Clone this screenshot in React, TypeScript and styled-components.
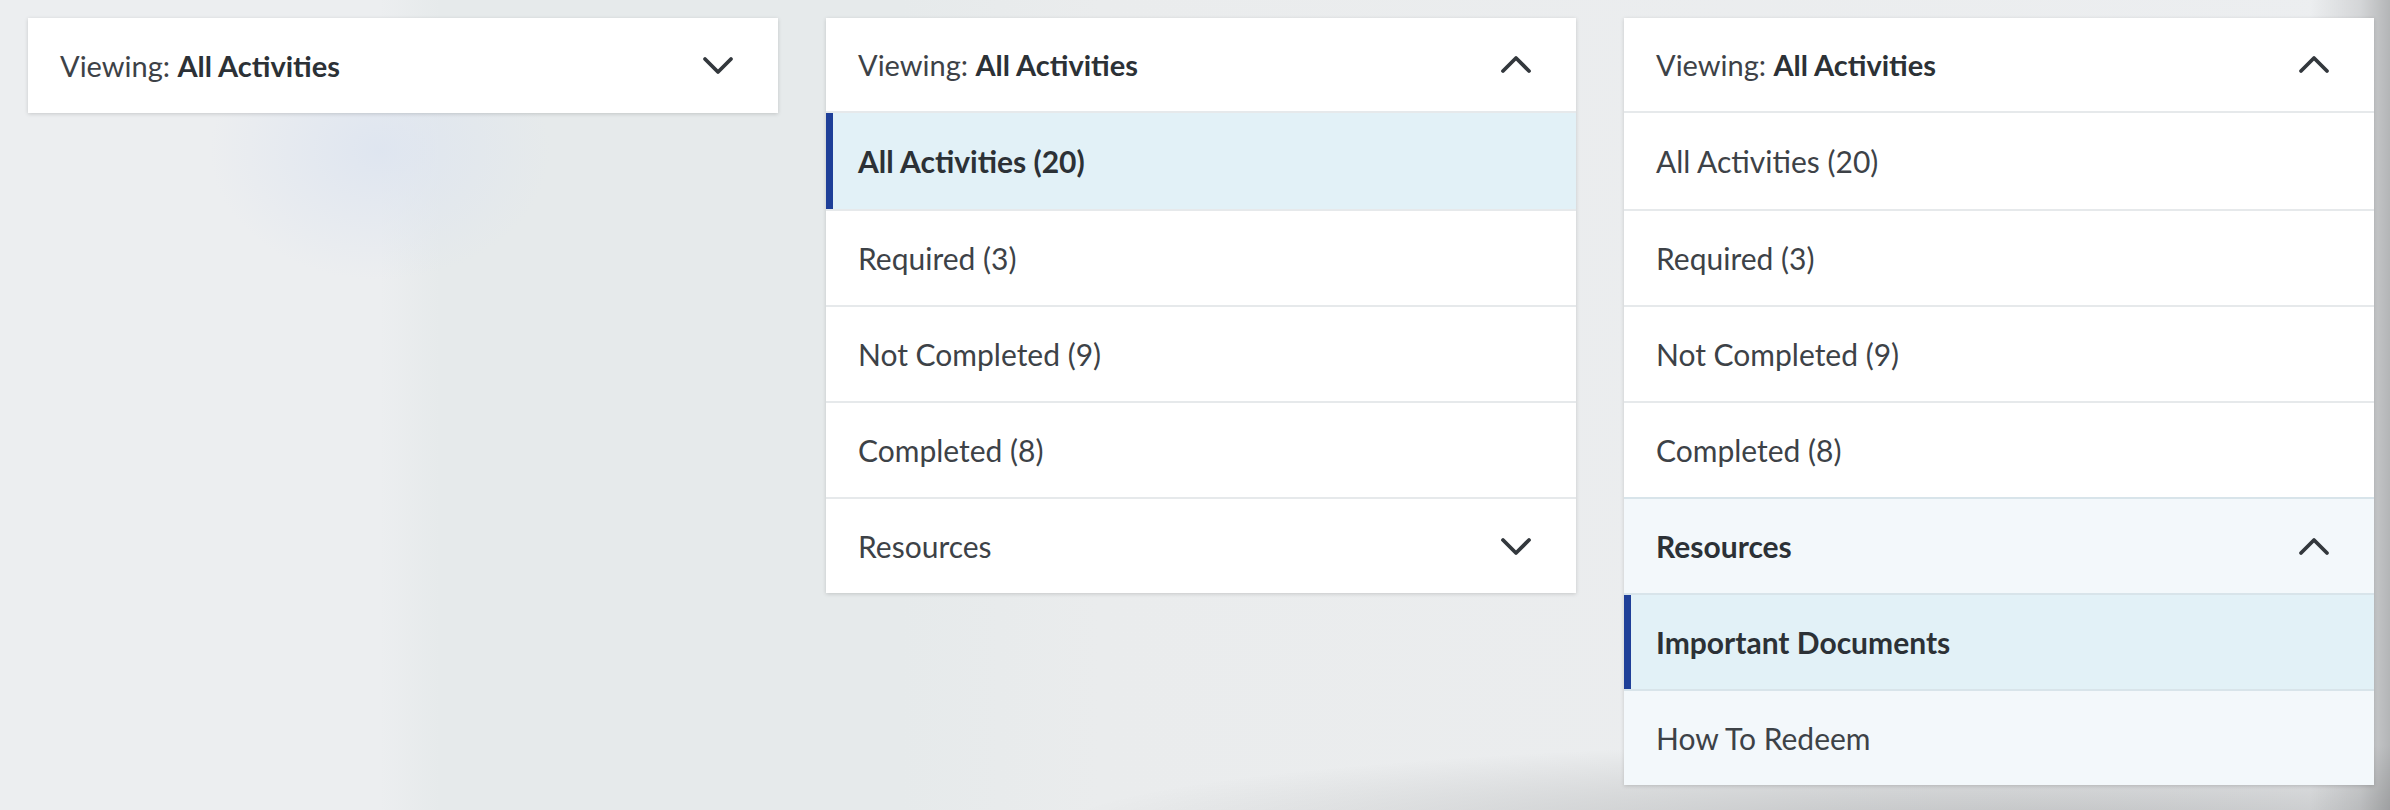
import React from 'react'
import styled, { createGlobalStyle } from 'styled-components'

const GlobalStyle = createGlobalStyle`
  html, body {
    margin: 0;
    padding: 0;
  }
  body {
    font-family: 'Lato', 'Open Sans', sans-serif;
    min-height: 810px;
    overflow: hidden;
    background:
      radial-gradient(ellipse 170px 130px at 380px 150px, rgba(222, 229, 240, 0.95), rgba(222, 229, 240, 0)),
      linear-gradient(to right, rgba(0, 0, 0, 0) 2310px, rgba(0, 0, 0, 0.1) 2360px, rgba(0, 0, 0, 0.24) 2390px),
      radial-gradient(ellipse 1000px 90px at 2050px 830px, rgba(0, 0, 0, 0.2), rgba(0, 0, 0, 0)),
      linear-gradient(to right, #eceef0 0px, #eceef0 380px, #e6eaeb 440px, #e6eaeb 900px, #eaeced 1100px, #eceef0 2390px);
  }
`

const Page = styled.div`
  display: flex;
  align-items: flex-start;
  gap: 48px;
  padding: 18px 0 18px 28px;
`

const Panel = styled.div`
  flex: 0 0 750px;
  width: 750px;
  background: #ffffff;
  box-shadow: 0 1px 4px rgba(0, 0, 0, 0.16);
  display: flex;
  flex-direction: column;
`

const Header = styled.div<{ $open?: boolean }>`
  box-sizing: border-box;
  height: 95px;
  display: flex;
  align-items: center;
  justify-content: space-between;
  padding: 0 44px 0 32px;
  font-size: 29px;
  color: #3d4247;
  ${({ $open }) => ($open ? 'border-bottom: 2px solid #e6e9eb;' : '')}
`

const Strong = styled.span`
  font-weight: 700;
  color: #2c3136;
`

const Row = styled.div<{ $selected?: boolean; $sub?: boolean; $bold?: boolean; $first?: boolean }>`
  box-sizing: border-box;
  height: 96px;
  display: flex;
  align-items: center;
  justify-content: space-between;
  position: relative;
  padding: 0 44px 0 32px;
  font-size: 30px;
  font-weight: ${({ $bold }) => ($bold ? 700 : 400)};
  color: ${({ $bold }) => ($bold ? '#2c3136' : '#3d4247')};
  background: ${({ $selected, $sub }) => ($selected ? '#e2f1f7' : $sub ? '#f3f8fb' : '#ffffff')};
  border-top: ${({ $first }) => ($first ? 'none' : '2px solid')};
  border-color: ${({ $selected, $sub }) => ($selected || $sub ? '#d8e4ea' : '#e6e9eb')};

  ${({ $selected }) =>
    $selected
      ? `
    &::before {
      content: '';
      position: absolute;
      left: 0;
      top: 0;
      bottom: 0;
      width: 7px;
      background: #1e3f98;
    }
  `
      : ''}
`

const Chevron = ({ up }: { up?: boolean }) => (
  <svg width="32" height="19" viewBox="0 0 32 19" fill="none">
    <path
      d={up ? 'M3 16 L16 3 L29 16' : 'M3 3 L16 16 L29 3'}
      stroke="#33383d"
      strokeWidth="3.8"
      strokeLinecap="round"
      strokeLinejoin="round"
    />
  </svg>
)

const filters = ['All Activities (20)', 'Required (3)', 'Not Completed (9)', 'Completed (8)']

export default function App() {
  return (
    <>
      <GlobalStyle />
      <Page>
        <Panel>
          <Header>
            <span>
              Viewing: <Strong>All Activities</Strong>
            </span>
            <Chevron />
          </Header>
        </Panel>

        <Panel>
          <Header $open>
            <span>
              Viewing: <Strong>All Activities</Strong>
            </span>
            <Chevron up />
          </Header>
          {filters.map((f, i) => (
            <Row key={f} $first={i === 0} $selected={i === 0} $bold={i === 0}>
              {f}
            </Row>
          ))}
          <Row>
            Resources
            <Chevron />
          </Row>
        </Panel>

        <Panel>
          <Header $open>
            <span>
              Viewing: <Strong>All Activities</Strong>
            </span>
            <Chevron up />
          </Header>
          {filters.map((f, i) => (
            <Row key={f} $first={i === 0}>
              {f}
            </Row>
          ))}
          <Row $sub $bold>
            Resources
            <Chevron up />
          </Row>
          <Row $selected $bold>
            Important Documents
          </Row>
          <Row $sub>How To Redeem</Row>
        </Panel>
      </Page>
    </>
  )
}
